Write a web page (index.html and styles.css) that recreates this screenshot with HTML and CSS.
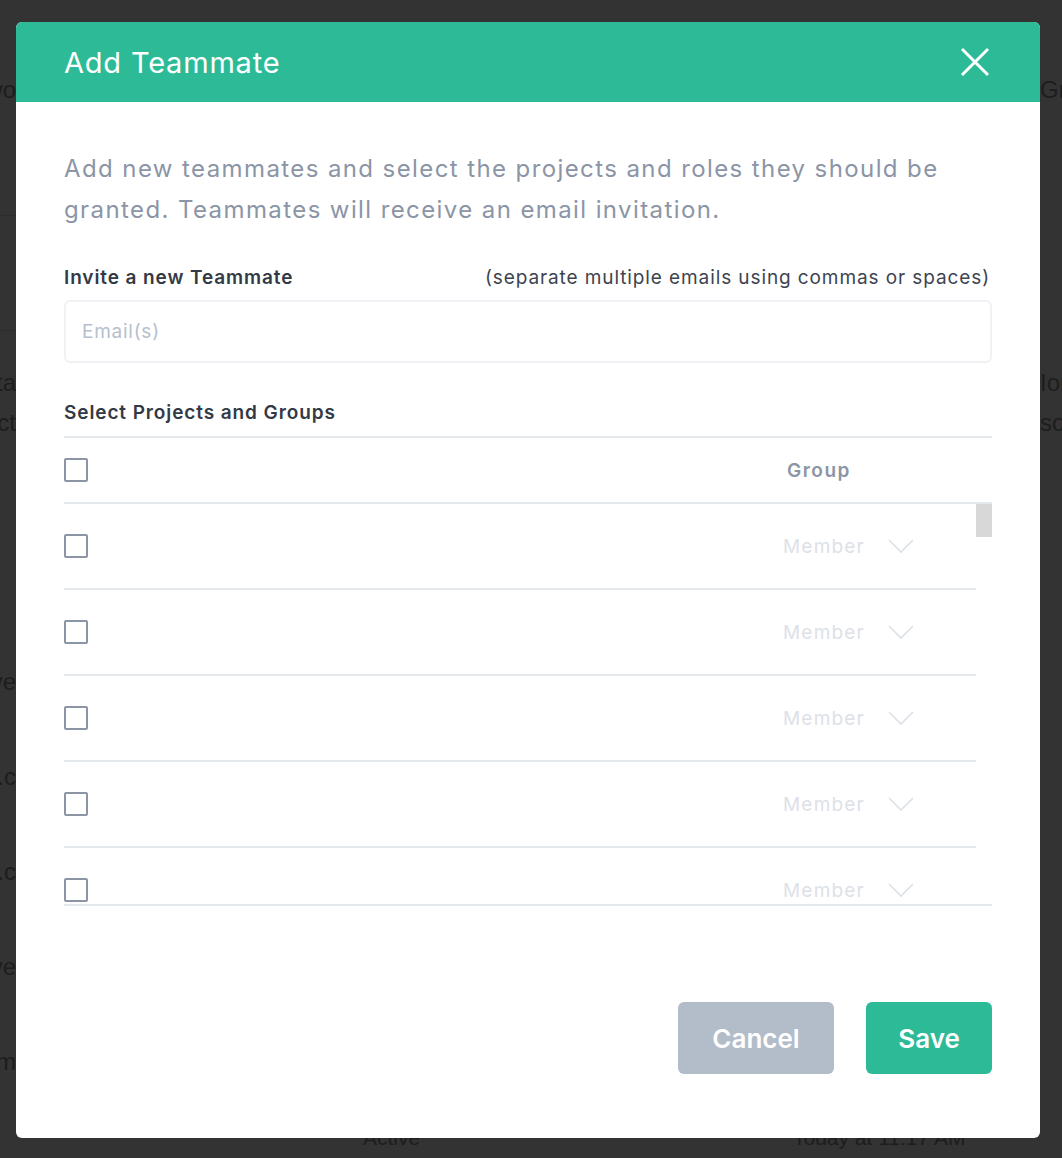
FILE: index.html
```html
<!DOCTYPE html>
<html lang="en">
<head>
    <meta charset="UTF-8">
    <meta name="viewport" content="width=device-width, initial-scale=1.0">
    <link rel="stylesheet" href="styles.css">
    <title>Add Teammate</title>
</head>
<body>

<!-- page underneath the dialog, dimmed -->
<div class="bg-page">
    <div class="bg-row row-top">
        <div class="bg-left">Two</div>
        <div class="bg-right">Groups</div>
    </div>
    <div class="bg-rule rule-a"></div>
    <div class="bg-rule rule-b"></div>
    <div class="bg-row row-pair">
        <div class="bg-left">Data</div>
        <div class="bg-right">Ion</div>
    </div>
    <div class="bg-row">
        <div class="bg-left">Project</div>
        <div class="bg-right">sons</div>
    </div>
    <div class="bg-row row-gap1">
        <div class="bg-left">Active</div>
    </div>
    <div class="bg-row row-gap2">
        <div class="bg-left">mail.c</div>
    </div>
    <div class="bg-row row-gap2">
        <div class="bg-left">site.c</div>
    </div>
    <div class="bg-row row-gap2">
        <div class="bg-left">Active</div>
    </div>
    <div class="bg-row row-gap2">
        <div class="bg-left">Team</div>
    </div>
    <div class="bg-row row-last">
        <div class="bg-left"></div>
        <div class="bg-status">Active</div>
        <div class="bg-date">Today at 11:17 AM</div>
    </div>
</div>

<div class="modal">
    <div class="modal-header">
        <h2 class="modal-title">Add Teammate</h2>
        <svg class="close-icon" width="30" height="30" viewBox="0 0 30 30">
            <path d="M2 2 L28 28 M28 2 L2 28" stroke="#fff" stroke-width="3" fill="none"/>
        </svg>
    </div>

    <div class="modal-body">
        <p class="intro">Add new teammates and select the projects and roles they should be granted. Teammates will receive an email invitation.</p>

        <div class="field-label">
            <span class="label-strong">Invite a new Teammate</span>
            <span class="label-hint">(separate multiple emails using commas or spaces)</span>
        </div>
        <input type="text" class="email-input" placeholder="Email(s)">

        <div class="section-label">Select Projects and Groups</div>

        <div class="table-head">
            <span class="checkbox"></span>
            <span class="group-head">Group</span>
        </div>

        <div class="table-scroll">
            <div class="rows">
                <div class="proj-row">
                    <span class="checkbox"></span>
                    <span class="role">Member <svg class="chev" width="26" height="16" viewBox="0 0 26 16"><path d="M1 2 L13 14 L25 2" stroke="#dde1e7" stroke-width="1.6" fill="none"/></svg></span>
                </div>
                <div class="proj-row">
                    <span class="checkbox"></span>
                    <span class="role">Member <svg class="chev" width="26" height="16" viewBox="0 0 26 16"><path d="M1 2 L13 14 L25 2" stroke="#dde1e7" stroke-width="1.6" fill="none"/></svg></span>
                </div>
                <div class="proj-row">
                    <span class="checkbox"></span>
                    <span class="role">Member <svg class="chev" width="26" height="16" viewBox="0 0 26 16"><path d="M1 2 L13 14 L25 2" stroke="#dde1e7" stroke-width="1.6" fill="none"/></svg></span>
                </div>
                <div class="proj-row">
                    <span class="checkbox"></span>
                    <span class="role">Member <svg class="chev" width="26" height="16" viewBox="0 0 26 16"><path d="M1 2 L13 14 L25 2" stroke="#dde1e7" stroke-width="1.6" fill="none"/></svg></span>
                </div>
                <div class="proj-row">
                    <span class="checkbox"></span>
                    <span class="role">Member <svg class="chev" width="26" height="16" viewBox="0 0 26 16"><path d="M1 2 L13 14 L25 2" stroke="#dde1e7" stroke-width="1.6" fill="none"/></svg></span>
                </div>
            </div>
            <div class="scrollbar"><div class="thumb"></div></div>
        </div>

        <div class="modal-footer">
            <button type="button" class="btn btn-cancel">Cancel</button>
            <button type="button" class="btn btn-save">Save</button>
        </div>
    </div>
</div>

</body>
</html>
```

FILE: styles.css
```css
body {
  margin: 0;
  background: #333333;
  font-family: "Liberation Sans", Arial, sans-serif;
  overflow: hidden;
}

/* dimmed page behind */
.bg-page {
  height: 1158px;
  color: #1d1d1d;
  font-size: 24px;
  overflow: hidden;
}

.bg-row {
  display: flex;
  height: 40px;
  align-items: center;
  white-space: nowrap;
}

.row-top { margin-top: 70px; }
.row-pair { margin-top: 32px; }
.row-gap1 { margin-top: 219px; }
.row-gap2 { margin-top: 55px; }
.row-last { margin-top: 36px; font-size: 21px; }

.bg-left {
  width: 16px;
  flex: none;
  display: flex;
  justify-content: flex-end;
}

.bg-right {
  margin-left: 1024px;
}

.bg-status {
  margin-left: 347px;
  width: 430px;
}

.bg-rule {
  height: 1px;
  width: 16px;
  background: #2c2c2c;
}
.rule-a { margin-top: 105px; }
.rule-b { margin-top: 114px; }

/* dialog */
.modal {
  position: fixed;
  top: 22px;
  left: 16px;
  width: 1024px;
  height: 1116px;
  background: #ffffff;
  border-radius: 6px;
  overflow: hidden;
  font-family: Inter, "Liberation Sans", sans-serif;
}

.modal-header {
  height: 80px;
  background: #2cbb96;
  display: flex;
  align-items: center;
  justify-content: space-between;
  padding: 0 50px 0 48px;
}

.modal-title {
  margin: 0;
  color: #ffffff;
  font-size: 29px;
  font-weight: 400;
  letter-spacing: 0.8px;
}

.modal-body {
  padding: 46px 48px 0;
}

.intro {
  margin: 0;
  font-size: 24px;
  line-height: 41px;
  color: #8b95a6;
  letter-spacing: 1.4px;
}

.field-label {
  display: flex;
  justify-content: space-between;
  align-items: center;
  margin-top: 35px;
  height: 24px;
  font-size: 19px;
  letter-spacing: 0.9px;
}

.label-strong {
  font-weight: 600;
  color: #333a45;
}

.label-hint {
  color: #3d4450;
  margin-right: 2px;
}

.email-input {
  display: block;
  width: 100%;
  height: 63px;
  margin-top: 11px;
  box-sizing: border-box;
  border: 2px solid #eff1f4;
  border-radius: 6px;
  padding: 0 16px;
  font-family: inherit;
  font-size: 19px;
  letter-spacing: 0.75px;
  outline: none;
}

.email-input::placeholder {
  color: #b6c0cc;
}

.section-label {
  margin-top: 38px;
  font-size: 19px;
  font-weight: 600;
  color: #333a45;
  line-height: 24px;
  letter-spacing: 0.9px;
  padding-bottom: 11px;
  border-bottom: 2px solid #e4e7ec;
}

.checkbox {
  display: block;
  width: 24px;
  height: 24px;
  box-sizing: border-box;
  border: 2px solid #8b95a6;
  border-radius: 2px;
  flex: none;
}

.table-head {
  display: flex;
  align-items: center;
  height: 64px;
  border-bottom: 2px solid #e4e7ec;
}

.group-head {
  margin-left: 699px;
  font-size: 19px;
  font-weight: 600;
  color: #8b95a6;
  letter-spacing: 1.5px;
}

.table-scroll {
  display: flex;
  height: 400px;
  border-bottom: 2px solid #e4e7ec;
}

.rows {
  flex: 1;
  overflow: hidden;
}

.proj-row {
  display: flex;
  align-items: center;
  height: 84px;
  border-bottom: 2px solid #e4e7ec;
}

.role {
  display: flex;
  align-items: center;
  margin-left: 695px;
  font-size: 19px;
  color: #dde1e7;
  letter-spacing: 1.2px;
}

.chev {
  margin-left: 23px;
}

.scrollbar {
  width: 16px;
}

.thumb {
  height: 33px;
  background: #d8d8d8;
}

.modal-footer {
  display: flex;
  justify-content: flex-end;
  gap: 32px;
  margin-top: 96px;
}

.btn {
  height: 72px;
  border: none;
  border-radius: 6px;
  color: #ffffff;
  font-family: inherit;
  font-size: 26px;
  font-weight: 600;
  cursor: pointer;
}

.btn-cancel {
  width: 156px;
  background: #b3bcc9;
}

.btn-save {
  width: 126px;
  background: #2cbb96;
}
```
